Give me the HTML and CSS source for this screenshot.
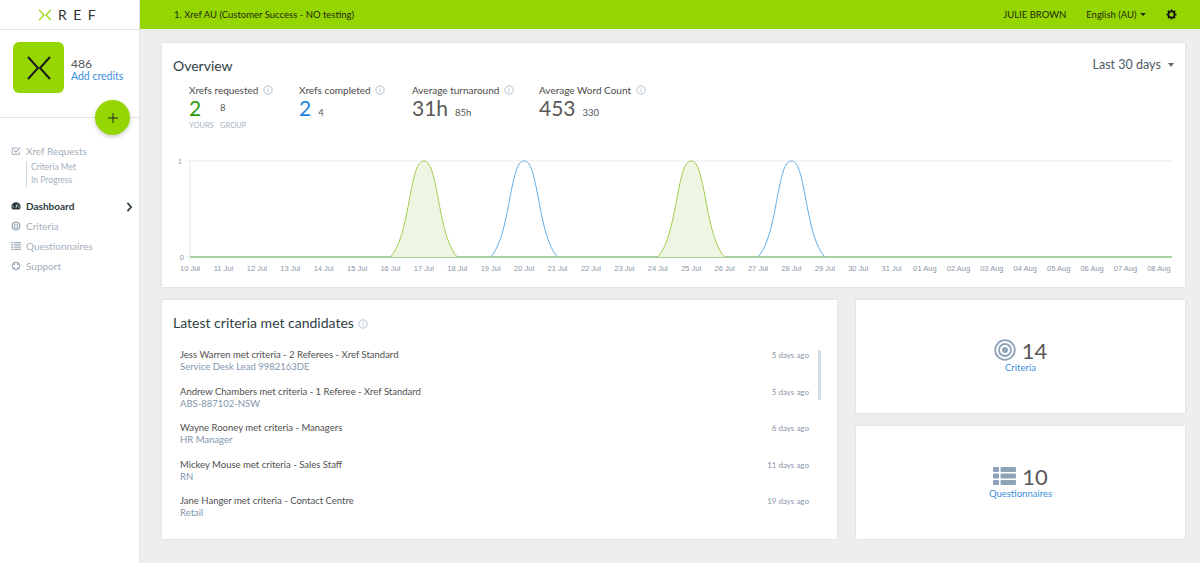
FILE: index.html
```html
<!DOCTYPE html>
<html lang="en">
<head>
    <meta charset="UTF-8">
    <title>Xref Dashboard</title>
    <link rel="stylesheet" href="styles.css">
</head>
<body>
    <svg class="icon-defs" width="0" height="0">
        <symbol id="info" viewBox="0 0 12 12">
            <circle cx="6" cy="6" r="5" fill="none" stroke="currentColor"/>
            <path d="M6 5.2v3.4M6 3.2v1" fill="none" stroke="currentColor"/>
        </symbol>
    </svg>
    <div class="layout">
        <aside class="sidebar">
            <div class="logo">
                <svg class="logo-x" viewBox="0 0 14 12"><path d="M1 1l5 5-5 5M13 1L8 6l5 5" fill="none" stroke="#96d600" stroke-width="1.2"/></svg>
                <span class="logo-text">REF</span>
            </div>
            <div class="account">
                <div class="avatar">
                    <svg viewBox="0 0 24 24"><path d="M1 1l10 11L1 23M23 1L13 12l10 11" fill="none" stroke="#1a1a1a" stroke-width="2"/></svg>
                </div>
                <div class="credits">
                    <div class="credits-count">486</div>
                    <a class="credits-link">Add credits</a>
                </div>
                <button class="add-button">
                    <svg viewBox="0 0 12 12"><path d="M6 1v10M1 6h10" stroke="#222" stroke-width="1"/></svg>
                </button>
            </div>
            <nav class="nav">
                <div class="nav-item">
                    <svg class="nav-icon" viewBox="0 0 12 12"><path d="M10 6.5V10H1.5V2.5H8" fill="none" stroke="currentColor" stroke-width="1.2"/><path d="M3.5 5l2.3 2.3L11 2" fill="none" stroke="currentColor" stroke-width="1.5"/></svg>
                    Xref Requests
                </div>
                <div class="subnav">
                    <div>Criteria Met</div>
                    <div>In Progress</div>
                </div>
                <div class="nav-item active">
                    <svg class="nav-icon" viewBox="0 0 12 12"><path d="M6 1.5A5.5 5.5 0 0 0 .5 7c0 1.3.4 2.4 1.1 3.3h8.8c.7-.9 1.1-2 1.1-3.3A5.5 5.5 0 0 0 6 1.5z" fill="currentColor"/><path d="M6 8l1.5-4" stroke="#fff" stroke-width="1"/><circle cx="2.5" cy="7" r=".7" fill="#fff"/><circle cx="9.5" cy="7" r=".7" fill="#fff"/></svg>
                    Dashboard
                    <svg class="nav-arrow" viewBox="0 0 8 12"><path d="M1.5 1l4.5 5-4.5 5" fill="none" stroke="#2c3b3f" stroke-width="2"/></svg>
                </div>
                <div class="nav-item">
                    <svg class="nav-icon" viewBox="0 0 12 12"><circle cx="6" cy="6" r="5.5" fill="currentColor"/><circle cx="6" cy="6" r="3.3" fill="none" stroke="#fff"/><circle cx="6" cy="6" r="1.4" fill="#fff"/></svg>
                    Criteria
                </div>
                <div class="nav-item">
                    <svg class="nav-icon" viewBox="0 0 12 12"><path d="M0 2h2.5M3.5 2H12M0 4.7h2.5M3.5 4.7H12M0 7.4h2.5M3.5 7.4H12M0 10.1h2.5M3.5 10.1H12" stroke="currentColor" stroke-width="1.6"/></svg>
                    Questionnaires
                </div>
                <div class="nav-item">
                    <svg class="nav-icon" viewBox="0 0 12 12"><circle cx="6" cy="6" r="4.3" fill="none" stroke="currentColor" stroke-width="1.5"/><path d="M2.5 2.5l2 2M9.5 2.5l-2 2M2.5 9.5l2-2M9.5 9.5l-2-2" stroke="currentColor" stroke-width="2"/></svg>
                    Support
                </div>
            </nav>
        </aside>

        <div class="page">
            <header class="topbar">
                <div class="account-name">1. Xref AU (Customer Success - NO testing)</div>
                <div class="user-name">JULIE BROWN</div>
                <div class="language">English (AU) <span class="caret-small"></span></div>
                <svg class="cog" viewBox="0 0 12 12"><circle cx="6" cy="6" r="3.4" fill="none" stroke="#111" stroke-width="2"/><path d="M6 .5v2M6 9.5v2M.5 6h2M9.5 6h2M2.1 2.1l1.4 1.4M8.5 8.5l1.4 1.4M2.1 9.9l1.4-1.4M8.5 3.5l1.4-1.4" stroke="#111" stroke-width="1.8"/></svg>
            </header>

            <main class="content">
                <section class="card overview">
                    <div class="overview-head">
                        <h2 class="card-title">Overview</h2>
                        <div class="range">Last 30 days <span class="caret"></span></div>
                    </div>
                    <div class="stats">
                        <div class="stat stat-requested">
                            <div class="stat-label">Xrefs requested <svg class="info"><use href="#info"/></svg></div>
                            <div class="split">
                                <div class="split-col">
                                    <div class="stat-value green">2</div>
                                    <div class="stat-caption">YOURS</div>
                                </div>
                                <div class="split-col">
                                    <div class="stat-small top">8</div>
                                    <div class="stat-caption">GROUP</div>
                                </div>
                            </div>
                        </div>
                        <div class="stat stat-completed">
                            <div class="stat-label">Xrefs completed <svg class="info"><use href="#info"/></svg></div>
                            <div class="stat-row"><span class="stat-value blue">2</span><span class="stat-small">4</span></div>
                        </div>
                        <div class="stat stat-turnaround">
                            <div class="stat-label">Average turnaround <svg class="info"><use href="#info"/></svg></div>
                            <div class="stat-row"><span class="stat-value grey">31h</span><span class="stat-small">85h</span></div>
                        </div>
                        <div class="stat">
                            <div class="stat-label">Average Word Count <svg class="info"><use href="#info"/></svg></div>
                            <div class="stat-row"><span class="stat-value grey">453</span><span class="stat-small">330</span></div>
                        </div>
                    </div>
                    <svg class="chart" id="chart" width="1023" height="130" viewBox="162 145 1023 130"></svg>
                </section>

                <section class="card latest">
                    <h2 class="card-title">Latest criteria met candidates <svg class="info"><use href="#info"/></svg></h2>
                    <div class="feed">
                        <div class="feed-list">
                            <div class="feed-item">
                                <div><div class="feed-name">Jess Warren met criteria - 2 Referees - Xref Standard</div><div class="feed-sub">Service Desk Lead 9982163DE</div></div>
                                <div class="feed-time">5 days ago</div>
                            </div>
                            <div class="feed-item">
                                <div><div class="feed-name">Andrew Chambers met criteria - 1 Referee - Xref Standard</div><div class="feed-sub">ABS-887102-NSW</div></div>
                                <div class="feed-time">5 days ago</div>
                            </div>
                            <div class="feed-item">
                                <div><div class="feed-name">Wayne Rooney met criteria - Managers</div><div class="feed-sub">HR Manager</div></div>
                                <div class="feed-time">6 days ago</div>
                            </div>
                            <div class="feed-item">
                                <div><div class="feed-name">Mickey Mouse met criteria - Sales Staff</div><div class="feed-sub">RN</div></div>
                                <div class="feed-time">11 days ago</div>
                            </div>
                            <div class="feed-item">
                                <div><div class="feed-name">Jane Hanger met criteria - Contact Centre</div><div class="feed-sub">Retail</div></div>
                                <div class="feed-time">19 days ago</div>
                            </div>
                        </div>
                        <div class="scrollbar"></div>
                    </div>
                </section>

                <div class="side-cards">
                    <section class="card tile">
                        <div class="tile-main">
                            <svg class="tile-icon" viewBox="0 0 22 22"><circle cx="11" cy="11" r="9.8" fill="none" stroke="#8fa3b8" stroke-width="1.8"/><circle cx="11" cy="11" r="6" fill="none" stroke="#8fa3b8" stroke-width="1.8"/><circle cx="11" cy="11" r="3" fill="#8fa3b8"/></svg>
                            <span class="tile-count">14</span>
                        </div>
                        <a class="tile-link">Criteria</a>
                    </section>
                    <section class="card tile">
                        <div class="tile-main">
                            <svg class="tile-icon tile-icon-list" viewBox="0 0 23 18" fill="#8fa3b8"><rect width="6" height="5" rx="1"/><rect x="7.500" width="15.500" height="5" rx="1"/><rect y="6.500" width="6" height="5" rx="1"/><rect x="7.500" y="6.500" width="15.500" height="5" rx="1"/><rect y="13" width="6" height="5" rx="1"/><rect x="7.500" y="13" width="15.500" height="5" rx="1"/></svg>
                            <span class="tile-count">10</span>
                        </div>
                        <a class="tile-link">Questionnaires</a>
                    </section>
                </div>
            </main>
        </div>
    </div>

    <script>
        // draw the overview chart from the day labels and peak positions
        const days = ['10 Jul','11 Jul','12 Jul','13 Jul','14 Jul','15 Jul','16 Jul','17 Jul','18 Jul','19 Jul','20 Jul','21 Jul','22 Jul','23 Jul','24 Jul','25 Jul','26 Jul','27 Jul','28 Jul','29 Jul','30 Jul','31 Jul','01 Aug','02 Aug','03 Aug','04 Aug','05 Aug','06 Aug','07 Aug','08 Aug'];
        const x0 = 190, step = 33.41, yTop = 161, yBase = 257;
        const dayX = i => x0 + i * step;

        function peak(i) {
            const cx = dayX(i);
            const yMid = (yTop + yBase) / 2;
            return `M${cx - step} ${yBase}C${cx - step * 0.62} ${yBase - 14} ${cx - step * 0.5} ${yMid} ${cx - step * 0.36} ${yMid - 22}` +
                `C${cx - step * 0.24} ${yTop + 6} ${cx - step * 0.14} ${yTop} ${cx} ${yTop}` +
                `C${cx + step * 0.14} ${yTop} ${cx + step * 0.24} ${yTop + 6} ${cx + step * 0.36} ${yMid - 22}` +
                `C${cx + step * 0.5} ${yMid} ${cx + step * 0.62} ${yBase - 14} ${cx + step} ${yBase}`;
        }

        let svg = `<path d="M186 ${yTop}H1172M186 ${yBase}H1172M190 ${yTop}V${yBase + 3}" fill="none" stroke="#e6e9ee"/>`;
        svg += `<text class="tick" x="182" y="${yTop + 3}" text-anchor="end">1</text>`;
        svg += `<text class="tick" x="184" y="${yBase + 3}" text-anchor="end">0</text>`;
        days.forEach((d, i) => {
            svg += `<text class="tick" x="${dayX(i)}" y="${yBase + 14}" text-anchor="middle">${d}</text>`;
        });
        svg += `<path d="M190 ${yBase}H1172" class="line-blue"/>`;
        svg += `<path d="M190 ${yBase}H1172" class="line-green"/>`;
        [7, 15].forEach(i => { svg += `<path d="${peak(i)}Z" class="area-green"/>`; });
        [10, 18].forEach(i => { svg += `<path d="${peak(i)}" class="line-blue"/>`; });
        [7, 15].forEach(i => { svg += `<path d="${peak(i)}" class="line-green"/>`; });
        document.getElementById('chart').innerHTML = svg;
    </script>
</body>
</html>
```

FILE: styles.css
```css
* {
    margin: 0;
    padding: 0;
    box-sizing: border-box;
}

html, body {
    height: 100%;
    overflow: hidden;
}

body {
    font-family: Lato, "Liberation Sans", sans-serif;
    background: #eeeeee;
    color: #444;
}

.icon-defs {
    position: absolute;
}

.layout {
    display: flex;
    height: 563px;
}

/* sidebar */
.sidebar {
    width: 140px;
    flex-shrink: 0;
    background: #fff;
    border-right: 1px solid #e4e4e4;
}

.logo {
    height: 30px;
    border-bottom: 1px solid #e4e4e4;
    display: flex;
    align-items: center;
    padding-left: 38px;
    gap: 6px;
}

.logo-x {
    width: 14px;
    height: 12px;
}

.logo-text {
    font-size: 14px;
    letter-spacing: 6.5px;
    color: #333;
}

.account {
    position: relative;
    height: 88px;
    padding: 12px 0 0 13px;
    display: flex;
    border-bottom: 1px solid #e4e4e4;
}

.avatar {
    width: 51px;
    height: 51px;
    background: #96d600;
    border-radius: 6px;
    display: flex;
    align-items: center;
    justify-content: center;
}

.avatar svg {
    width: 24px;
    height: 24px;
}

.credits {
    margin: 15px 0 0 7px;
}

.credits-count {
    font-size: 12px;
    line-height: 13px;
    color: #555;
}

.credits-link {
    display: block;
    font-size: 10.5px;
    line-height: 12px;
    color: #3a8ee0;
}

.add-button {
    position: absolute;
    left: 95px;
    top: 70px;
    width: 35px;
    height: 35px;
    border: none;
    border-radius: 50%;
    background: #96d600;
    box-shadow: 0 2px 4px rgba(0, 0, 0, 0.2);
    display: flex;
    align-items: center;
    justify-content: center;
}

.add-button svg {
    width: 12px;
    height: 12px;
}

.nav {
    padding: 23px 0 0 11px;
}

.nav-item {
    display: flex;
    align-items: center;
    gap: 5px;
    height: 20px;
    font-size: 10px;
    color: #a4afbd;
}

.nav-icon {
    width: 10px;
    height: 10px;
    color: #a4afbd;
}

.nav-item.active {
    color: #2c3b3f;
    font-weight: 700;
    position: relative;
}

.nav-item.active .nav-icon {
    color: #2c3b3f;
}

.nav-arrow {
    position: absolute;
    left: 115px;
    top: 6px;
    width: 7px;
    height: 10px;
}

.subnav {
    margin: 0 0 9px 15px;
    padding-left: 4px;
    border-left: 1px solid #d5d9de;
    font-size: 8.5px;
    line-height: 13px;
    color: #a4afbd;
}

/* top bar */
.page {
    flex: 1;
    min-width: 0;
}

.topbar {
    height: 29px;
    background: #96d600;
    display: flex;
    align-items: center;
    padding: 0 23px 0 34px;
    font-size: 9.5px;
    color: #1f2a10;
}

.account-name {
    flex: 1;
}

.user-name {
    margin-right: 20px;
}

.language {
    margin-right: 20px;
}

.caret-small {
    display: inline-block;
    margin: 0 0 2px 1px;
    border-left: 3px solid transparent;
    border-right: 3px solid transparent;
    border-top: 3px solid #1f2a10;
}

.cog {
    width: 11px;
    height: 11px;
}

/* cards */
.content {
    display: grid;
    grid-template-columns: 675px 329px;
    grid-template-rows: 244px 239px;
    column-gap: 19px;
    row-gap: 13px;
    padding: 14px 15px 0 22px;
}

.card {
    background: #fff;
    box-shadow: 0 0 2px rgba(0, 0, 0, 0.12);
}

.card-title {
    font-size: 14px;
    font-weight: 400;
    color: #2f3e44;
}

.overview {
    grid-column: 1 / 3;
    padding: 14px 0 0;
}

.overview-head {
    display: flex;
    justify-content: space-between;
    padding: 0 11px;
}

.range {
    font-size: 12.5px;
    color: #4d5b66;
}

.caret {
    display: inline-block;
    margin: 0 0 2px 4px;
    border-left: 3.5px solid transparent;
    border-right: 3.5px solid transparent;
    border-top: 4px solid #5e6b75;
}

.stats {
    display: flex;
    padding: 10px 0 0 27px;
}

.stat-requested {
    width: 110px;
}

.stat-completed {
    width: 113px;
}

.stat-turnaround {
    width: 127px;
}

.stat-label {
    font-size: 10px;
    line-height: 12px;
    color: #4a4a4a;
    white-space: nowrap;
}

.info {
    width: 10px;
    height: 10px;
    margin-left: 2px;
    color: #a8b6c6;
    vertical-align: -1px;
}

.stat-row {
    display: flex;
    align-items: baseline;
    gap: 7px;
}

.split {
    display: flex;
    gap: 6px;
}

.stat-value {
    font-size: 21px;
    line-height: 24px;
}

.stat-value.green {
    color: #2c9b12;
}

.stat-value.blue {
    color: #2186dc;
}

.stat-value.grey {
    color: #595959;
}

.stat-small {
    font-size: 9.5px;
    color: #555;
}

.stat-small.top {
    line-height: 24px;
}

.stat-caption {
    margin-top: 1px;
    font-size: 7.5px;
    line-height: 10px;
    color: #aab3c0;
}

.split-col:first-child {
    width: 25px;
}

.chart {
    display: block;
    position: absolute;
    left: 162px;
    top: 145px;
}

.tick {
    font-family: "Liberation Sans", sans-serif;
    font-size: 7.5px;
    fill: #8b97a8;
}

.line-blue {
    fill: none;
    stroke: #62aee8;
    stroke-width: 1;
}

.line-green {
    fill: none;
    stroke: #a6cf4f;
    stroke-width: 1;
}

.area-green {
    fill: #eef5e2;
    stroke: none;
}

/* latest criteria */
.latest {
    padding: 14px 11px 0;
}

.latest .card-title .info {
    margin-left: 1px;
}

.feed {
    position: relative;
    margin: 18px 5px 0 7px;
    height: 170px;
    overflow: hidden;
}

.feed-item {
    display: flex;
    justify-content: space-between;
    height: 36.6px;
    padding-right: 12px;
}

.feed-name {
    font-size: 9.5px;
    line-height: 12px;
    color: #4f4f4f;
}

.feed-sub {
    font-size: 9.5px;
    line-height: 12px;
    color: #8296ae;
}

.feed-time {
    font-size: 8px;
    line-height: 12px;
    color: #8a97a8;
}

.scrollbar {
    position: absolute;
    right: 0;
    top: 1px;
    width: 3px;
    height: 50px;
    border-radius: 2px;
    background: #d3dce6;
}

/* small tiles */
.side-cards {
    display: flex;
    flex-direction: column;
    gap: 13px;
}

.tile {
    height: 113px;
    display: flex;
    flex-direction: column;
    align-items: center;
    padding-top: 38px;
}

.tile-main {
    display: flex;
    align-items: center;
    gap: 6px;
    height: 24px;
}

.tile-icon {
    width: 22px;
    height: 22px;
}

.tile-icon-list {
    width: 23px;
    height: 18px;
}

.tile-count {
    font-size: 22px;
    color: #595959;
}

.tile-link {
    font-size: 9.5px;
    line-height: 12px;
    color: #3a8ee0;
}
```
